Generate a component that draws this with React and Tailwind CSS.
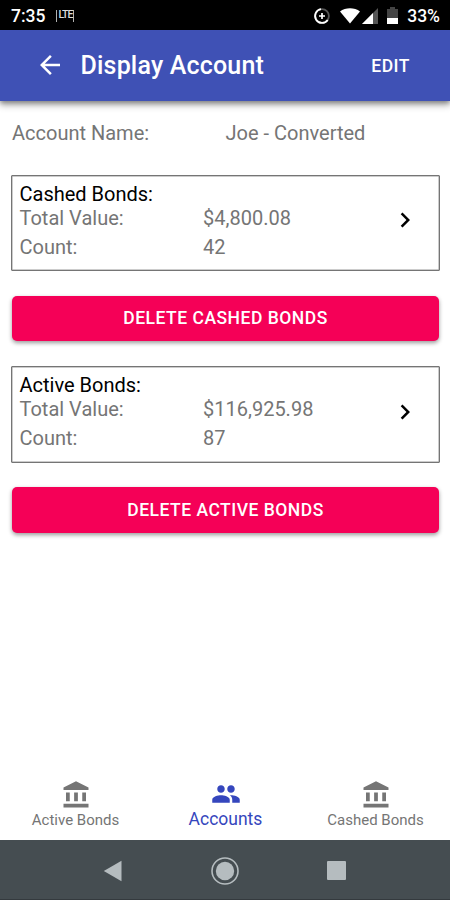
import clsx from 'clsx';

const accounts = [
  { title: 'Cashed Bonds:', total: '$4,800.08', count: 42, action: 'DELETE CASHED BONDS' },
  { title: 'Active Bonds:', total: '$116,925.98', count: 87, action: 'DELETE ACTIVE BONDS' },
];

const icons = {
  back: 'M20 11H7.83l5.59-5.59L12 4l-8 8 8 8 1.41-1.41L7.83 13H20v-2z',
  chevron: 'M10 6 8.59 7.41 13.17 12l-4.58 4.59L10 18l6-6z',
  bank: 'M4 10h3v7H4zM10.5 10h3v7h-3zM2 19h20v3H2zM17 10h3v7h-3zM12 1 2 6v2h20V6z',
  people:
    'M16 11c1.66 0 2.99-1.34 2.99-3S17.66 5 16 5c-1.66 0-3 1.34-3 3s1.34 3 3 3zm-8 0c1.66 0 2.99-1.34 2.99-3S9.66 5 8 5C6.34 5 5 6.34 5 8s1.34 3 3 3zm0 2c-2.33 0-7 1.17-7 3.5V19h14v-2.5c0-2.33-4.67-3.5-7-3.5zm8 0c-.29 0-.62.02-.97.05 1.16.84 1.97 1.97 1.97 3.45V19h6v-2.5c0-2.33-4.67-3.5-7-3.5z',
};

function Icon({ name, className }) {
  return (
    <svg viewBox="0 0 24 24" fill="currentColor" className={clsx('size-[30px] shrink-0', className)}>
      <path d={icons[name]} />
    </svg>
  );
}

function StatusBar() {
  return (
    <div className="flex h-[30px] shrink-0 items-center bg-black pt-[3px] pl-[11px] pr-2.5 text-white">
      <span className="text-[17.5px] leading-none font-medium">7:35</span>
      <span className="mb-0.5 ml-[11px] flex h-3 w-[18px] items-center justify-center border-x border-[#b0b0b0] text-[10.5px] leading-none font-medium tracking-[-0.9px] text-[#dedede]">
        LTE
      </span>
      <div className="ml-auto flex items-center">
        {/* Data saver */}
        <svg viewBox="0 0 18 18" className="mb-0.5 h-[18px] w-[18px]" fill="none">
          <circle cx="9" cy="9" r="6.9" stroke="#555" strokeWidth="1.8" />
          <path d="M8 2.2a6.9 6.9 0 1 0 6.7 10.7" stroke="#fff" strokeWidth="1.8" />
          <path d="M9 6v6M6 9h6" stroke="#fff" strokeWidth="1.7" />
        </svg>
        {/* Wifi */}
        <svg viewBox="0 0 20 16" className="mb-0.5 ml-[9px] h-4 w-5" fill="#fff">
          <path d="M0 3.5C5.5-.8 14.5-.8 20 3.5L10 15.6z" />
        </svg>
        {/* Signal */}
        <svg viewBox="0 0 16 16" className="mb-0.5 ml-0.5 h-4 w-4">
          <path d="M16 0v16H0z" fill="#555" />
          <path d="M11 5v11H0z" fill="#fff" />
        </svg>
        {/* Battery */}
        <svg viewBox="0 0 11 17" className="mb-0.5 ml-[9px] h-[17px] w-[11px]">
          <path d="M3 0h5v2h3v15H0V2h3z" fill="#444" />
          <path d="M0 11h11v6H0z" fill="#fff" />
        </svg>
        <span className="ml-[9px] text-[17.5px] leading-none font-medium">33%</span>
      </div>
    </div>
  );
}

function BondCard({ title, total, count }) {
  return (
    <div className="flex h-[96.5px] shrink-0 items-center rounded-[1px] border border-[#757575] pl-[7.5px] pr-[19px] shadow-[inset_0_0_0_0.5px_#999]">
      <div className="flex h-full flex-1 flex-col pt-1.5 text-xl leading-6">
        <h2 className="h-6 text-black">{title}</h2>
        <div className="flex h-[26px] text-[#757575]">
          <span className="w-[183.5px]">Total Value:</span>
          <span>{total}</span>
        </div>
        <div className="mt-[3px] flex text-[#757575]">
          <span className="w-[183.5px]">Count:</span>
          <span>{count}</span>
        </div>
      </div>
      <Icon name="chevron" className="-mt-[5px] text-black" />
    </div>
  );
}

function Tab({ icon, label, active }) {
  return (
    <button
      className={clsx(
        'flex flex-1 flex-col items-center pl-px',
        active ? 'text-[#3546bd]' : 'text-[#757575]'
      )}
    >
      <Icon name={icon} className={active && '-mt-px mb-px'} />
      <span
        className={clsx(
          'flex h-5 items-center leading-none whitespace-nowrap',
          active ? 'text-[17.5px]' : 'text-[15px]'
        )}
      >
        {label}
      </span>
    </button>
  );
}

export default function App() {
  return (
    <div className="flex h-[900px] w-[450px] flex-col overflow-hidden bg-white font-['Roboto',sans-serif]">
      <StatusBar />
      <header className="z-10 flex h-[70.5px] shrink-0 items-center bg-[#3f51b5] pl-[35px] pr-10 text-white shadow-[0_2px_5px_rgba(0,0,0,0.4),0_5px_7px_rgba(0,0,0,0.2)]">
        <Icon name="back" />
        <h1 className="ml-[15.5px] pt-px text-[25px] font-medium tracking-[0.19px]">Display Account</h1>
        <button className="ml-auto pt-px text-[17.5px] font-medium tracking-[0.5px]">EDIT</button>
      </header>

      <main className="flex-1 pt-5 pr-2.5 pl-[11px]">
        <div className="flex h-[25px] items-center pl-px text-xl text-[#757575]">
          <span className="w-[213.5px]">Account Name:</span>
          <span>Joe - Converted</span>
        </div>
        <div className="mt-[29px] flex flex-col gap-[25px]">
          {accounts.map((account) => (
            <section key={account.title} className="flex h-[166.5px] flex-col gap-[24.5px]">
              <BondCard {...account} />
              <button className="mx-px h-[45.5px] shrink-0 rounded-[5px] bg-[#f50057] text-[17.5px] font-medium tracking-[0.5px] text-white shadow-[0_2px_4px_rgba(0,0,0,0.4)]">
                {account.action}
              </button>
            </section>
          ))}
        </div>
      </main>

      <nav className="flex h-[61px] shrink-0 items-start pt-px">
        <Tab icon="bank" label="Active Bonds" />
        <Tab icon="people" label="Accounts" active />
        <Tab icon="bank" label="Cashed Bonds" />
      </nav>

      {/* System navigation */}
      <div className="flex h-[60px] shrink-0 items-center border-b border-[#343a3e] bg-[#454d51] pt-0.5 pl-[103px] text-[#b5bcbf]">
        <svg viewBox="0 0 20 22" className="h-[22px] w-5" fill="currentColor">
          <path d="M18.5.8v20.4L.8 11z" />
        </svg>
        <svg viewBox="0 0 28 28" className="ml-[88px] h-7 w-7">
          <circle cx="14" cy="14" r="13" fill="none" stroke="currentColor" strokeWidth="1.6" />
          <circle cx="14" cy="14" r="9.2" fill="currentColor" />
        </svg>
        <span className="ml-[88px] h-[19px] w-[19px] rounded-[1px] bg-[#b5bcbf]" />
      </div>
    </div>
  );
}
